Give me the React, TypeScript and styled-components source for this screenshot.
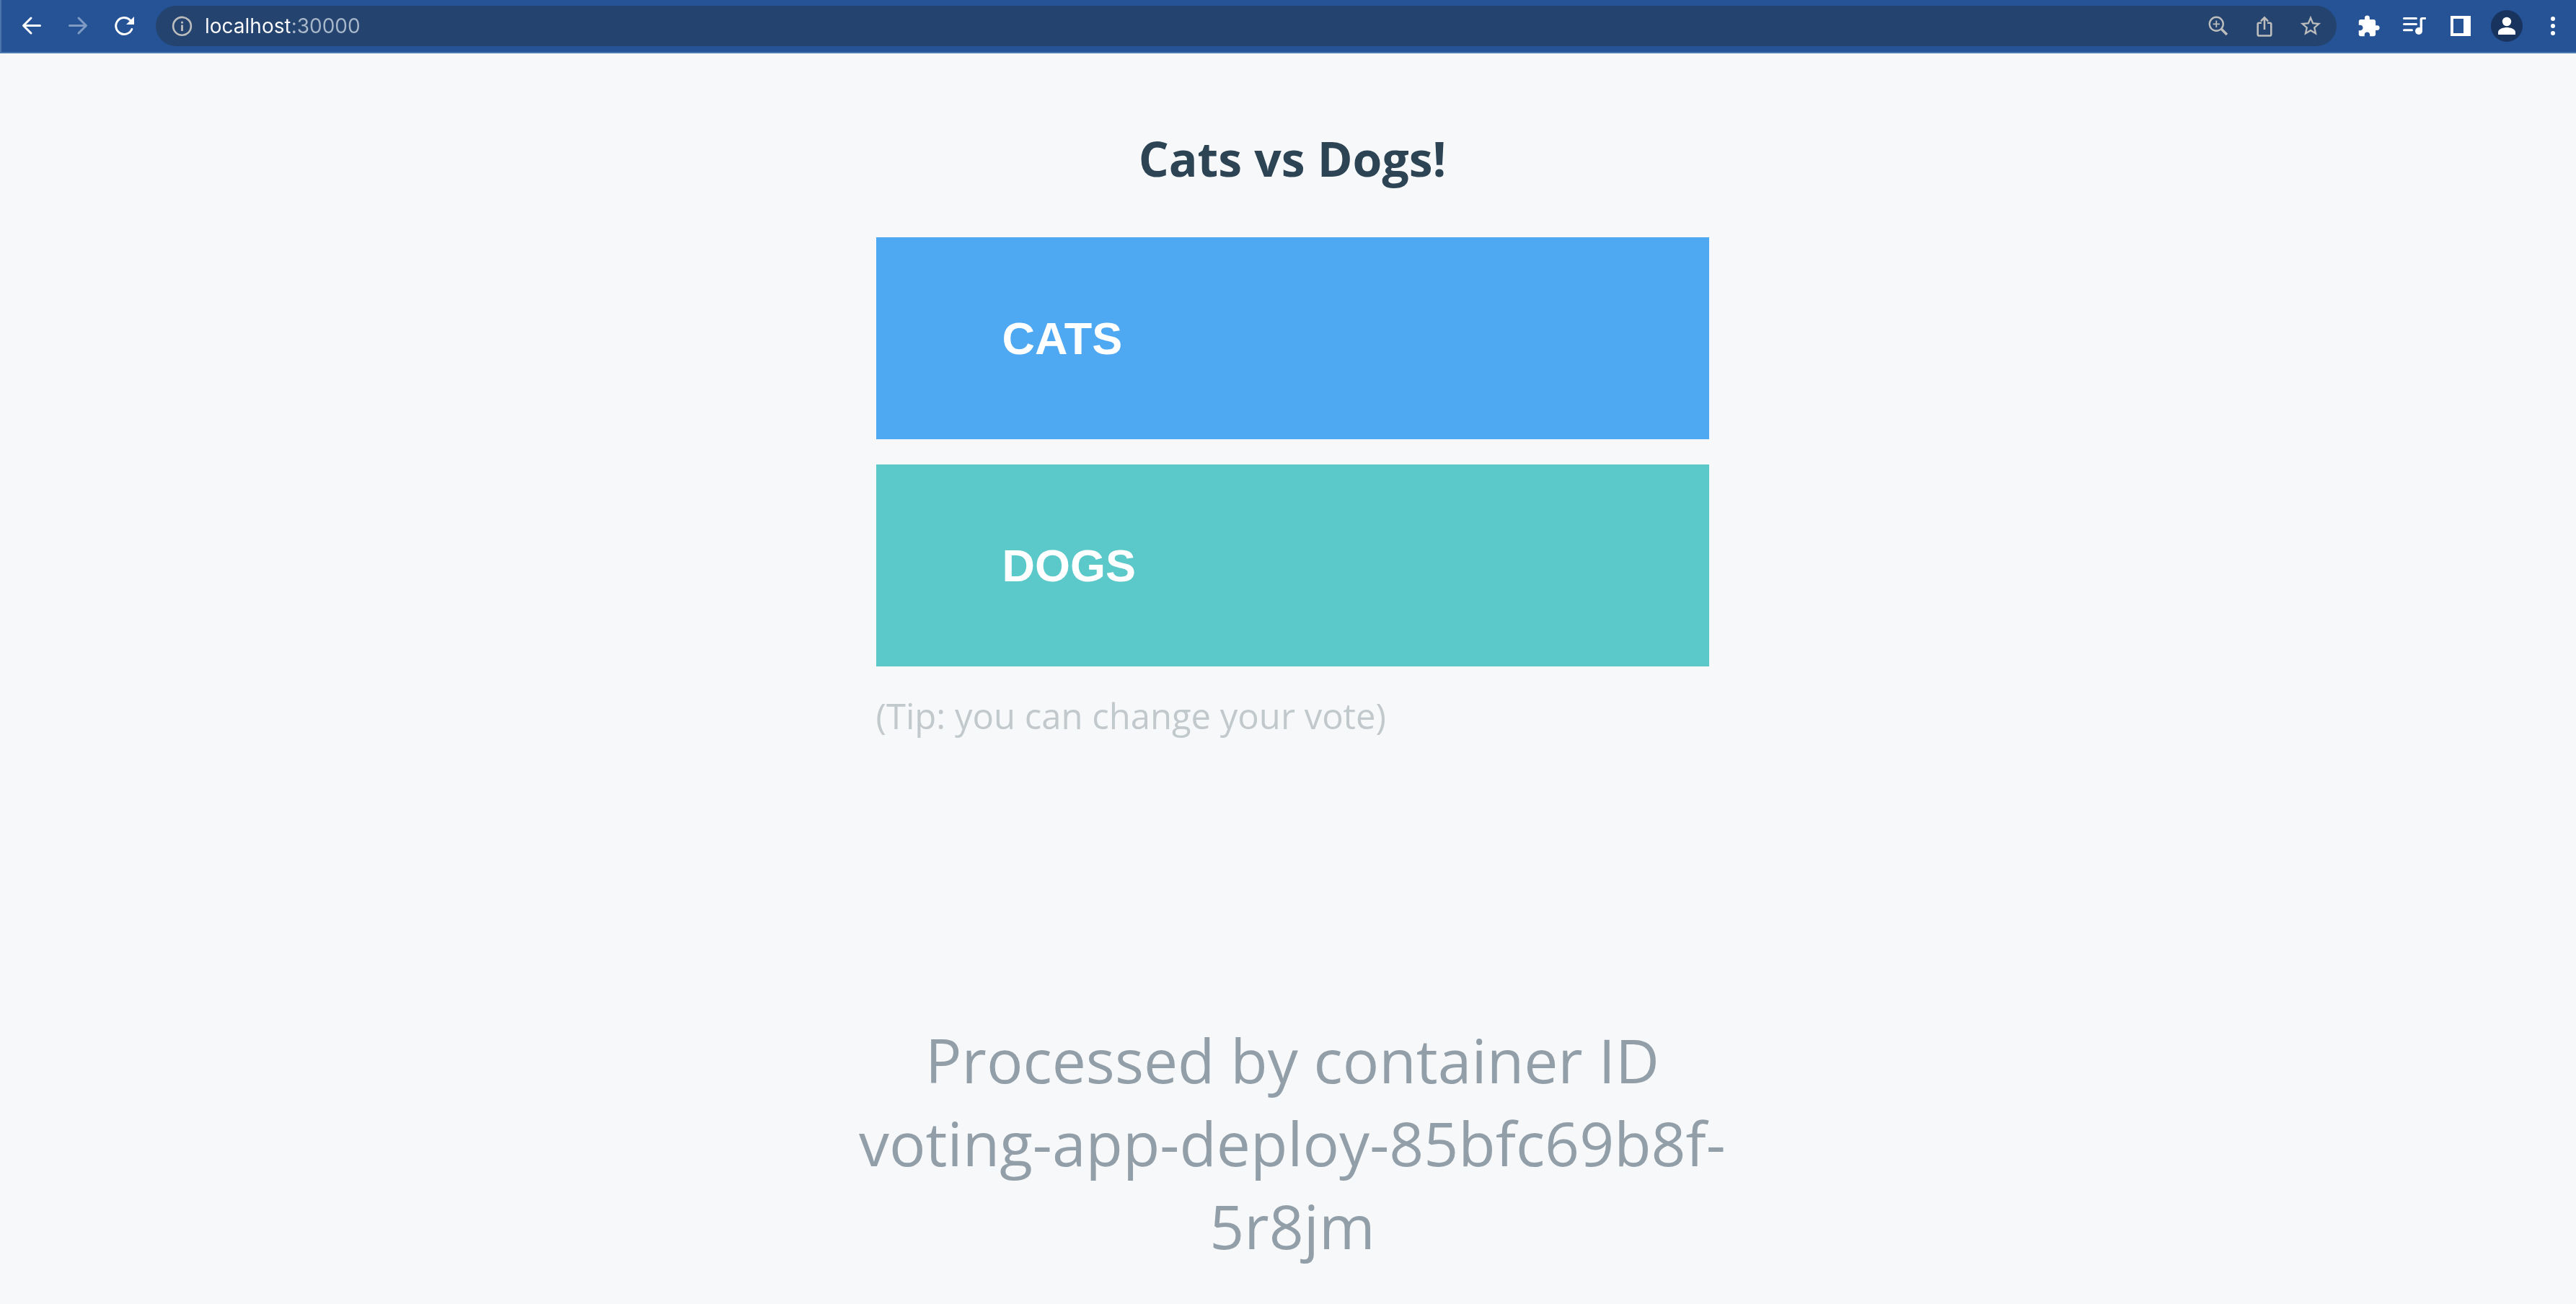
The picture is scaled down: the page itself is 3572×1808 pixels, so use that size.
import React, { useState } from "react";
import styled, { createGlobalStyle } from "styled-components";
import { MdExtension, MdStarBorder } from "react-icons/md";

const GlobalStyle = createGlobalStyle`
  *, *::before, *::after { box-sizing: border-box; }
  body {
    margin: 0;
    background: #f7f8fa;
    font-family: "Open Sans", sans-serif;
  }
`;

const Window = styled.div`
  display: flex;
  flex-direction: column;
  min-height: 100vh;
`;

const Toolbar = styled.header`
  display: flex;
  align-items: center;
  gap: 22px;
  padding: 8px 10px 8px 20px;
  background: #255395;
  border-left: 2px solid #4a74ae;
  border-bottom: 2px solid #4a78b0;
`;

const ToolGroup = styled.nav`
  display: flex;
  align-items: center;
  gap: 20px;
`;

const IconButton = styled.button<{ $tone?: string; $fill?: string }>`
  display: flex;
  align-items: center;
  justify-content: center;
  flex: none;
  width: 44px;
  height: 44px;
  padding: 0;
  border: 0;
  border-radius: 50%;
  background: ${(p) => p.$fill ?? "transparent"};
  color: ${(p) => p.$tone ?? "#ffffff"};
  cursor: pointer;
`;

const AddressBar = styled.div`
  display: flex;
  align-items: center;
  flex: 1;
  min-width: 0;
  height: 56px;
  padding: 0 14px;
  border-radius: 28px;
  background: #24446f;
`;

const AddressInput = styled.input`
  flex: 1;
  min-width: 0;
  height: 40px;
  margin-left: 10px;
  padding: 0;
  border: 0;
  outline: 0;
  font-family: Inter, sans-serif;
  font-size: 28px;
  line-height: 40px;
  color: #ffffff;
  background: linear-gradient(90deg, #ffffff 118px, #a9b7ca 118px);
  background-clip: text;
  -webkit-background-clip: text;
  -webkit-text-fill-color: transparent;
`;

const Page = styled.main`
  display: flex;
  flex-direction: column;
  align-items: center;
  flex: 1;
  padding: 100px 0 48px 12px;
`;

const Title = styled.h1`
  margin: 0 0 65px;
  font-size: 66px;
  font-weight: 700;
  line-height: 90px;
  color: #2c4454;
`;

const Choices = styled.form`
  display: flex;
  flex-direction: column;
  gap: 35px;
  width: 100%;
  max-width: 1225px;
  padding: 0 35px;
`;

const Choice = styled.button<{ $color: string }>`
  height: 280px;
  padding: 0 175px;
  border: 0;
  background: ${(p) => p.$color};
  color: #ffffff;
  font-family: "Liberation Sans", Arial, sans-serif;
  font-size: 63px;
  font-weight: 700;
  line-height: 72px;
  text-align: left;
  text-transform: uppercase;
  cursor: pointer;
`;

const Tip = styled.p`
  margin: 0;
  font-size: 49px;
  line-height: 67px;
  color: #c1c9cd;
`;

const Hostname = styled.p`
  width: 100%;
  max-width: 1225px;
  margin: 386px 0 0;
  font-size: 84px;
  line-height: 115px;
  text-align: center;
  color: #929fa8;
`;

const stroke = { fill: "none", stroke: "currentColor", strokeWidth: 3 } as const;

const Glyph = ({ children }: { children: React.ReactNode }) => (
  <svg width="44" height="44" viewBox="0 0 44 44" aria-hidden="true">
    {children}
  </svg>
);

const BackIcon = () => (
  <Glyph>
    <path {...stroke} strokeLinecap="round" strokeLinejoin="round" d="M33.5 21.5H11M21 11L10.5 21.5L21 32" />
  </Glyph>
);

const ForwardIcon = () => (
  <Glyph>
    <path {...stroke} strokeLinecap="round" strokeLinejoin="round" d="M10.5 21.5H33M23 11L33.5 21.5L23 32" />
  </Glyph>
);

const ReloadIcon = () => (
  <Glyph>
    <path {...stroke} strokeLinecap="round" d="M30.5 14A11.5 11.5 0 1 0 32.8 26.5" />
    <path fill="currentColor" d="M36 9V20H25Z" />
  </Glyph>
);

const InfoIcon = () => (
  <Glyph>
    <circle {...stroke} strokeWidth={2.6} cx="22.5" cy="22.3" r="12.4" />
    <path {...stroke} strokeWidth={2.8} d="M22.5 20.5V29M22.5 15.8V18.4" />
  </Glyph>
);

const ZoomIcon = () => (
  <Glyph>
    <circle {...stroke} strokeWidth={2.4} cx="19.3" cy="19.3" r="9.5" />
    <path {...stroke} strokeWidth={1.8} d="M14.6 19.3H24M19.3 14.6V24" />
    <path {...stroke} strokeWidth={3.6} d="M26.5 26.5L34 34" />
  </Glyph>
);

const ShareIcon = () => (
  <Glyph>
    <path
      {...stroke}
      strokeWidth={2.6}
      strokeLinejoin="round"
      d="M18 17.8H14.5Q12.7 17.8 12.7 19.6V33.7Q12.7 35.5 14.5 35.5H29.5Q31.3 35.5 31.3 33.7V19.6Q31.3 17.8 29.5 17.8H26"
    />
    <path {...stroke} strokeWidth={2.6} d="M22 27V10.5M17 15.3L22 10.3L27 15.3" />
  </Glyph>
);

const QueueIcon = () => (
  <Glyph>
    <path {...stroke} strokeLinecap="round" d="M7.5 11.5H24.5M7.5 19.5H24.5M7.5 27.7H18.5" />
    <circle fill="currentColor" cx="28" cy="29" r="5" />
    <path fill="currentColor" d="M29.6 29V12.5Q29.6 10 32 10H37.3Q38 10 38 11.4T37.3 12.9H33V29Z" />
  </Glyph>
);

const PanelIcon = () => (
  <Glyph>
    <path fill="currentColor" fillRule="evenodd" d="M8 8H36V36H8ZM12 12V32H26V12Z" />
  </Glyph>
);

const PersonIcon = () => (
  <Glyph>
    <circle fill="currentColor" cx="22" cy="16" r="6.2" />
    <path fill="currentColor" d="M10 34V30.5C10 26 18 24 22 24S34 26 34 30.5V34Z" />
  </Glyph>
);

const MenuIcon = () => (
  <Glyph>
    <circle fill="currentColor" cx="22" cy="12" r="3" />
    <circle fill="currentColor" cx="22" cy="22" r="3" />
    <circle fill="currentColor" cx="22" cy="32" r="3" />
  </Glyph>
);

const MUTED = "#bdbdbd";

const options = [
  { value: "a", label: "Cats", color: "#4ea8f2" },
  { value: "b", label: "Dogs", color: "#5bc8c9" },
];

export default function App() {
  const [url, setUrl] = useState("localhost:30000");

  return (
    <Window>
      <GlobalStyle />
      <Toolbar>
        <ToolGroup aria-label="Navigation">
          <IconButton type="button" aria-label="Back"><BackIcon /></IconButton>
          <IconButton type="button" aria-label="Forward" $tone="#7f9bc3"><ForwardIcon /></IconButton>
          <IconButton type="button" aria-label="Reload"><ReloadIcon /></IconButton>
        </ToolGroup>
        <AddressBar>
          <IconButton type="button" aria-label="Site information" $tone={MUTED}><InfoIcon /></IconButton>
          <AddressInput
            type="text"
            aria-label="Address"
            spellCheck={false}
            value={url}
            onChange={(e) => setUrl(e.target.value)}
          />
          <ToolGroup aria-label="Page actions">
            <IconButton type="button" aria-label="Zoom" $tone={MUTED}><ZoomIcon /></IconButton>
            <IconButton type="button" aria-label="Share" $tone={MUTED}><ShareIcon /></IconButton>
            <IconButton type="button" aria-label="Bookmark" $tone={MUTED}><MdStarBorder size={34} /></IconButton>
          </ToolGroup>
        </AddressBar>
        <ToolGroup aria-label="Browser">
          <IconButton type="button" aria-label="Extensions"><MdExtension size={33} /></IconButton>
          <IconButton type="button" aria-label="Media controls"><QueueIcon /></IconButton>
          <IconButton type="button" aria-label="Side panel"><PanelIcon /></IconButton>
          <IconButton type="button" aria-label="Profile" $fill="#18345e"><PersonIcon /></IconButton>
          <IconButton type="button" aria-label="Menu"><MenuIcon /></IconButton>
        </ToolGroup>
      </Toolbar>
      <Page>
        <Title>Cats vs Dogs!</Title>
        <Choices onSubmit={(e) => e.preventDefault()}>
          {options.map((o) => (
            <Choice key={o.value} type="submit" name="vote" value={o.value} $color={o.color}>
              {o.label}
            </Choice>
          ))}
          <Tip>(Tip: you can change your vote)</Tip>
        </Choices>
        <Hostname>Processed by container ID voting-app-deploy-85bfc69b8f-5r8jm</Hostname>
      </Page>
    </Window>
  );
}
